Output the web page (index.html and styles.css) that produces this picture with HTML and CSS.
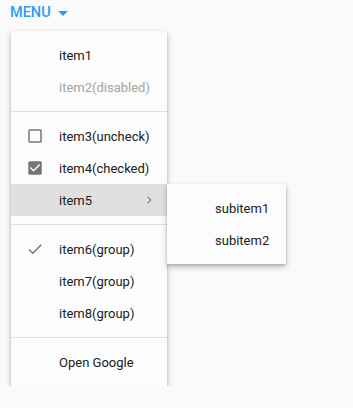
FILE: index.html
```html
<!DOCTYPE html>
<html>
<head>
<meta charset="utf-8">
<link rel="stylesheet" href="styles.css">
</head>
<body>
<div class="bar">
  <span class="menu-btn">MENU</span>
  <svg class="caret" width="24" height="24" viewBox="0 0 24 24"><path d="M7 10l5 5 5-5z" fill="#2f9bf5"/></svg>
</div>
<div class="menu">
  <div class="group">
    <div class="item"><span class="icon"></span><span class="label">item1</span></div>
    <div class="item disabled"><span class="icon"></span><span class="label">item2(disabled)</span></div>
  </div>
  <div class="divider"></div>
  <div class="group">
    <div class="item"><span class="icon"><svg width="18" height="18" viewBox="0 0 24 24"><path d="M19 5v14H5V5h14m0-2H5c-1.1 0-2 .9-2 2v14c0 1.1.9 2 2 2h14c1.1 0 2-.9 2-2V5c0-1.1-.9-2-2-2z" fill="#757575"/></svg></span><span class="label">item3(uncheck)</span></div>
    <div class="item"><span class="icon"><svg width="18" height="18" viewBox="0 0 24 24"><path d="M19 3H5c-1.11 0-2 .9-2 2v14c0 1.1.89 2 2 2h14c1.11 0 2-.9 2-2V5c0-1.1-.89-2-2-2zm-9 14l-5-5 1.41-1.41L10 14.17l7.590-7.59L19 8l-9 9z" fill="#757575"/></svg></span><span class="label">item4(checked)</span></div>
    <div class="item active has-sub"><span class="icon"></span><span class="label">item5</span>
      <svg class="chev" width="8" height="10" viewBox="0 0 8 10"><path d="M1.8 2L4.8 5 1.8 8" fill="none" stroke="#8a8a8a" stroke-width="1.3"/></svg>
      <div class="submenu">
        <div class="item sub"><span class="label">subitem1</span></div>
        <div class="item sub"><span class="label">subitem2</span></div>
      </div>
    </div>
  </div>
  <div class="divider"></div>
  <div class="group">
    <div class="item"><span class="icon"><svg width="18" height="18" viewBox="0 0 24 24"><path d="M9 16.17L4.83 12l-1.42 1.41L9 19 21 7l-1.41-1.41z" fill="#757575"/></svg></span><span class="label">item6(group)</span></div>
    <div class="item"><span class="icon"></span><span class="label">item7(group)</span></div>
    <div class="item"><span class="icon"></span><span class="label">item8(group)</span></div>
  </div>
  <div class="divider"></div>
  <div class="group">
    <div class="item"><span class="icon"></span><span class="label">Open Google</span></div>
  </div>
</div>
</body>
</html>
```
FILE: styles.css
```css
html, body {
  margin: 0;
  padding: 0;
  background: #fafafa;
  font-family: Roboto, "Noto Sans", sans-serif;
}
.bar {
  height: 31px;
  display: flex;
  align-items: center;
  padding-left: 10px;
}
.menu-btn {
  font-size: 14.5px;
  font-weight: 500;
  color: #2f9bf5;
  line-height: 16px;
  margin-top: -6px;
}
.caret {
  margin-left: 0;
  margin-top: -6px;
}
.menu {
  margin-left: 11px;
  width: 156px;
  background: #fcfcfc;
  box-shadow: 0 3px 6px rgba(0,0,0,0.25), 0 1px 2px rgba(0,0,0,0.15);
}
.group {
  padding: 8px 0;
}
.divider {
  height: 1px;
  background: #e0e0e0;
}
.item {
  position: relative;
  height: 32px;
  display: flex;
  align-items: center;
  font-size: 13px;
  color: #212121;
}
.item.disabled {
  color: #a3a3a3;
}
.item.active {
  background: #e0e0e0;
}
.icon {
  width: 18px;
  height: 18px;
  margin-left: 15px;
  margin-right: 15px;
  display: flex;
}
.label {
  flex: 1;
}
.chev {
  margin-right: 13px;
}
.submenu {
  position: absolute;
  left: 156px;
  top: 0;
  width: 119px;
  padding: 8px 0;
  background: #fcfcfc;
  box-shadow: 0 3px 6px rgba(0,0,0,0.25), 0 1px 2px rgba(0,0,0,0.15);
}
.item.sub {
  padding-left: 48px;
}
```
